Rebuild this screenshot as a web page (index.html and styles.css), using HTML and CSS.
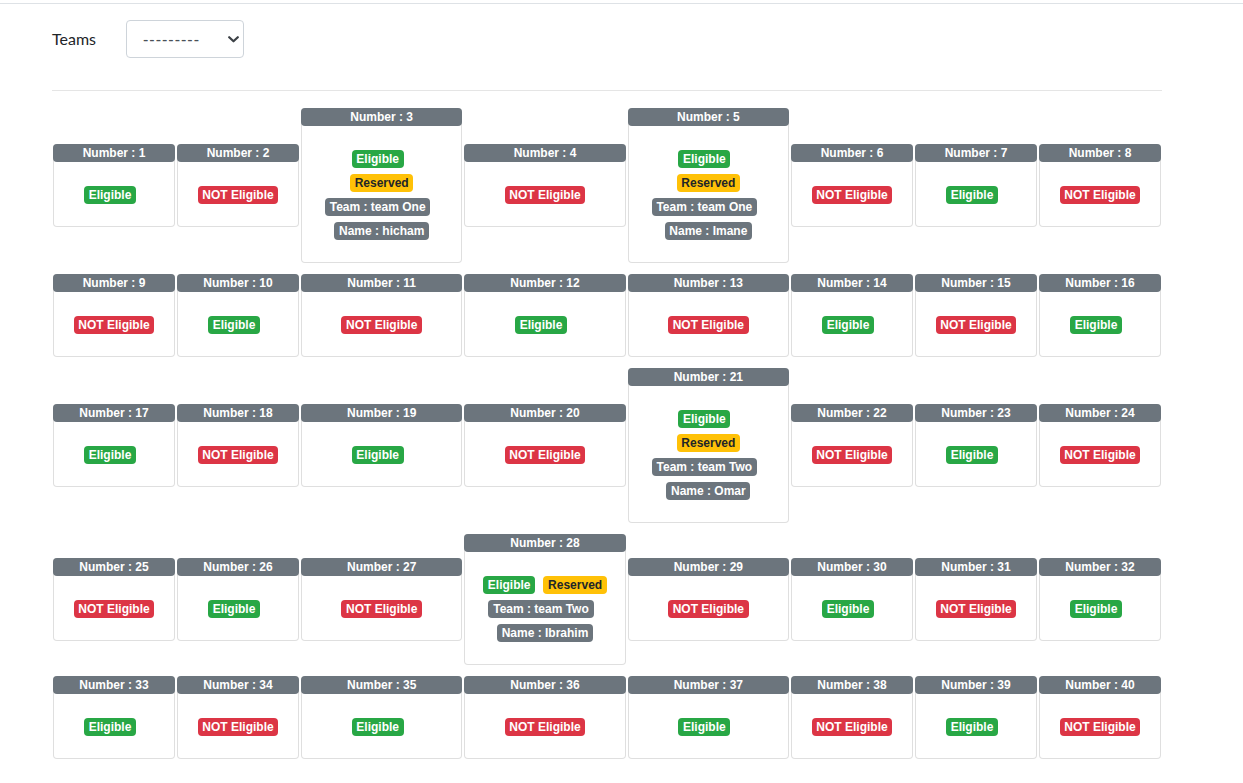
FILE: index.html
```html
<!DOCTYPE html>
<html lang="en">
<head>
<meta charset="utf-8">
<title>Teams</title>
<link rel="stylesheet" href="styles.css">
</head>
<body>
<div class="topbar"></div>
<main class="container">
  <div class="form-row">
    <label class="form-label" for="team">Teams</label>
    <div class="select-wrap">
      <select id="team" class="form-select"><option>---------</option></select>
      <svg class="chev" width="11" height="7" viewBox="0 0 11 7"><polyline points="1.2,1.2 5.5,5.3 9.8,1.2" fill="none" stroke="#3c4146" stroke-width="2.2" stroke-linecap="round" stroke-linejoin="round"/></svg>
    </div>
  </div>
  <hr class="divider">
  <div class="grid">
    <!-- row 1 -->
    <div class="card"><div class="card-head">Number : 1</div><div class="card-body"><div class="line"><span class="badge ok shift">Eligible</span></div></div></div>
    <div class="card"><div class="card-head">Number : 2</div><div class="card-body"><div class="line"><span class="badge no">NOT Eligible</span></div></div></div>
    <div class="card"><div class="card-head">Number : 3</div><div class="card-body"><div class="line"><span class="badge ok shift">Eligible</span></div><div class="line"><span class="badge res">Reserved</span></div><div class="line"><span class="badge info shift">Team : team One</span></div><div class="line"><span class="badge info">Name : hicham</span></div></div></div>
    <div class="card"><div class="card-head">Number : 4</div><div class="card-body"><div class="line"><span class="badge no">NOT Eligible</span></div></div></div>
    <div class="card"><div class="card-head">Number : 5</div><div class="card-body"><div class="line"><span class="badge ok shift">Eligible</span></div><div class="line"><span class="badge res">Reserved</span></div><div class="line"><span class="badge info shift">Team : team One</span></div><div class="line"><span class="badge info">Name : Imane</span></div></div></div>
    <div class="card"><div class="card-head">Number : 6</div><div class="card-body"><div class="line"><span class="badge no">NOT Eligible</span></div></div></div>
    <div class="card"><div class="card-head">Number : 7</div><div class="card-body"><div class="line"><span class="badge ok shift">Eligible</span></div></div></div>
    <div class="card"><div class="card-head">Number : 8</div><div class="card-body"><div class="line"><span class="badge no">NOT Eligible</span></div></div></div>
    <!-- row 2 -->
    <div class="card"><div class="card-head">Number : 9</div><div class="card-body"><div class="line"><span class="badge no">NOT Eligible</span></div></div></div>
    <div class="card"><div class="card-head">Number : 10</div><div class="card-body"><div class="line"><span class="badge ok shift">Eligible</span></div></div></div>
    <div class="card"><div class="card-head">Number : 11</div><div class="card-body"><div class="line"><span class="badge no">NOT Eligible</span></div></div></div>
    <div class="card"><div class="card-head">Number : 12</div><div class="card-body"><div class="line"><span class="badge ok shift">Eligible</span></div></div></div>
    <div class="card"><div class="card-head">Number : 13</div><div class="card-body"><div class="line"><span class="badge no">NOT Eligible</span></div></div></div>
    <div class="card"><div class="card-head">Number : 14</div><div class="card-body"><div class="line"><span class="badge ok shift">Eligible</span></div></div></div>
    <div class="card"><div class="card-head">Number : 15</div><div class="card-body"><div class="line"><span class="badge no">NOT Eligible</span></div></div></div>
    <div class="card"><div class="card-head">Number : 16</div><div class="card-body"><div class="line"><span class="badge ok shift">Eligible</span></div></div></div>
    <!-- row 3 -->
    <div class="card"><div class="card-head">Number : 17</div><div class="card-body"><div class="line"><span class="badge ok shift">Eligible</span></div></div></div>
    <div class="card"><div class="card-head">Number : 18</div><div class="card-body"><div class="line"><span class="badge no">NOT Eligible</span></div></div></div>
    <div class="card"><div class="card-head">Number : 19</div><div class="card-body"><div class="line"><span class="badge ok shift">Eligible</span></div></div></div>
    <div class="card"><div class="card-head">Number : 20</div><div class="card-body"><div class="line"><span class="badge no">NOT Eligible</span></div></div></div>
    <div class="card"><div class="card-head">Number : 21</div><div class="card-body"><div class="line"><span class="badge ok shift">Eligible</span></div><div class="line"><span class="badge res">Reserved</span></div><div class="line"><span class="badge info shift">Team : team Two</span></div><div class="line"><span class="badge info">Name : Omar</span></div></div></div>
    <div class="card"><div class="card-head">Number : 22</div><div class="card-body"><div class="line"><span class="badge no">NOT Eligible</span></div></div></div>
    <div class="card"><div class="card-head">Number : 23</div><div class="card-body"><div class="line"><span class="badge ok shift">Eligible</span></div></div></div>
    <div class="card"><div class="card-head">Number : 24</div><div class="card-body"><div class="line"><span class="badge no">NOT Eligible</span></div></div></div>
    <!-- row 4 -->
    <div class="card"><div class="card-head">Number : 25</div><div class="card-body"><div class="line"><span class="badge no">NOT Eligible</span></div></div></div>
    <div class="card"><div class="card-head">Number : 26</div><div class="card-body"><div class="line"><span class="badge ok shift">Eligible</span></div></div></div>
    <div class="card"><div class="card-head">Number : 27</div><div class="card-body"><div class="line"><span class="badge no">NOT Eligible</span></div></div></div>
    <div class="card"><div class="card-head">Number : 28</div><div class="card-body"><div class="line"><span class="badge ok">Eligible</span><span class="badge res">Reserved</span></div><div class="line"><span class="badge info shift">Team : team Two</span></div><div class="line"><span class="badge info">Name : Ibrahim</span></div></div></div>
    <div class="card"><div class="card-head">Number : 29</div><div class="card-body"><div class="line"><span class="badge no">NOT Eligible</span></div></div></div>
    <div class="card"><div class="card-head">Number : 30</div><div class="card-body"><div class="line"><span class="badge ok shift">Eligible</span></div></div></div>
    <div class="card"><div class="card-head">Number : 31</div><div class="card-body"><div class="line"><span class="badge no">NOT Eligible</span></div></div></div>
    <div class="card"><div class="card-head">Number : 32</div><div class="card-body"><div class="line"><span class="badge ok shift">Eligible</span></div></div></div>
    <!-- row 5 -->
    <div class="card"><div class="card-head">Number : 33</div><div class="card-body"><div class="line"><span class="badge ok shift">Eligible</span></div></div></div>
    <div class="card"><div class="card-head">Number : 34</div><div class="card-body"><div class="line"><span class="badge no">NOT Eligible</span></div></div></div>
    <div class="card"><div class="card-head">Number : 35</div><div class="card-body"><div class="line"><span class="badge ok shift">Eligible</span></div></div></div>
    <div class="card"><div class="card-head">Number : 36</div><div class="card-body"><div class="line"><span class="badge no">NOT Eligible</span></div></div></div>
    <div class="card"><div class="card-head">Number : 37</div><div class="card-body"><div class="line"><span class="badge ok shift">Eligible</span></div></div></div>
    <div class="card"><div class="card-head">Number : 38</div><div class="card-body"><div class="line"><span class="badge no">NOT Eligible</span></div></div></div>
    <div class="card"><div class="card-head">Number : 39</div><div class="card-body"><div class="line"><span class="badge ok shift">Eligible</span></div></div></div>
    <div class="card"><div class="card-head">Number : 40</div><div class="card-body"><div class="line"><span class="badge no">NOT Eligible</span></div></div></div>
  </div>
</main>
</body>
</html>
```

FILE: styles.css
```css
html, body {
  margin: 0;
  padding: 0;
  background: #fff;
  color: #212529;
  font-family: Lato, "Liberation Sans", Arial, sans-serif;
  font-size: 16px;
}

.topbar {
  height: 3px;
  border-bottom: 1px solid #dee2e6;
}

.container {
  width: 1110px;
  padding-left: 52px;
}

.form-row {
  display: flex;
  align-items: center;
  margin-top: 16px;
  height: 38px;
  margin-bottom: 32px;
}

.form-label {
  width: 74px;
  font-size: 16px;
  line-height: 24px;
}

.select-wrap {
  position: relative;
  width: 118px;
  height: 38px;
}

.form-select {
  -webkit-appearance: none;
  appearance: none;
  width: 118px;
  height: 38px;
  box-sizing: border-box;
  border: 1px solid #ced4da;
  border-radius: 4px;
  background: #fff;
  padding: 0 0 0 16px;
  font-family: "Liberation Sans", Arial, sans-serif;
  font-size: 16px;
  color: #495057;
  letter-spacing: 1px;
}

.chev {
  position: absolute;
  left: 102px;
  top: 16px;
  pointer-events: none;
}

.divider {
  margin: 0 0 16px;
  border: 0;
  border-top: 1px solid rgba(0, 0, 0, 0.1);
  height: 0;
}

.grid {
  display: grid;
  grid-template-columns: 122px 122px 1fr 1fr 1fr 122px 122px 122px;
  column-gap: 2px;
  row-gap: 11px;
  padding: 1px;
  align-items: center;
}

.card {
  border: 1px solid rgba(0, 0, 0, 0.125);
  border-radius: 4px;
  background: #fff;
  text-align: center;
}

.card-head {
  margin: -1px -1px 0;
  background: #6c757d;
  color: #fff;
  border-radius: 4px;
  font-family: "Liberation Sans", Arial, sans-serif;
  font-weight: 700;
  font-size: 12px;
  line-height: 12px;
  padding: 3px 4px;
}

.card-body {
  padding: 21px 4px 19px;
}

.line {
  height: 24px;
  display: flex;
  justify-content: center;
  align-items: center;
  gap: 8px;
}

.badge {
  display: inline-block;
  font-family: "Liberation Sans", Arial, sans-serif;
  font-weight: 700;
  font-size: 12px;
  line-height: 12px;
  padding: 3px 4.8px;
  border-radius: 4px;
  white-space: nowrap;
  color: #fff;
}

.badge.shift {
  margin-right: 8px;
}

.ok { background: #28a745; }
.no { background: #dc3545; }
.res { background: #ffc107; color: #212529; }
.info { background: #6c757d; }
```
